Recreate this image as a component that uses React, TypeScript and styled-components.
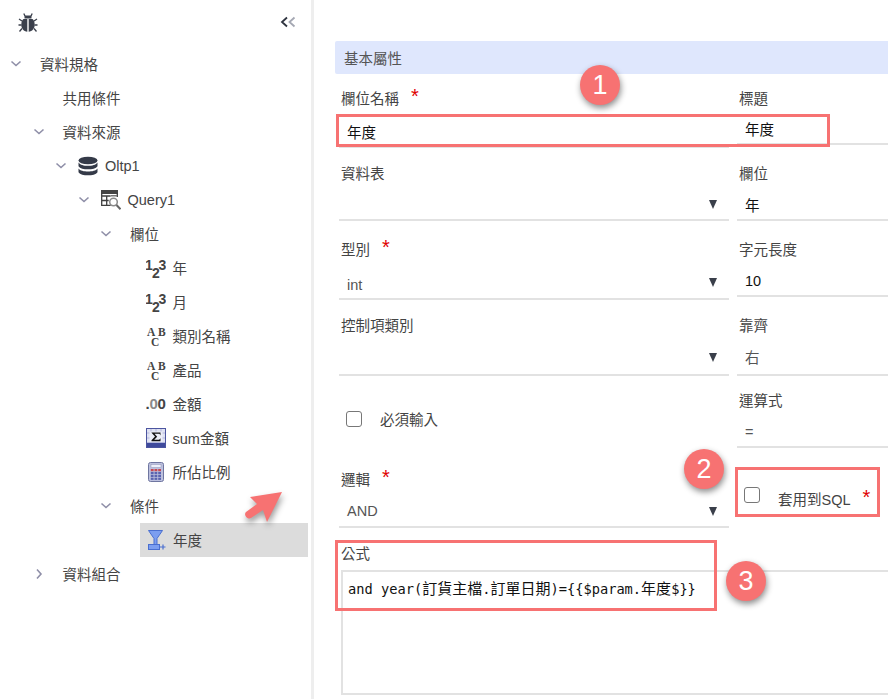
import React from 'react';
import styled, { createGlobalStyle } from 'styled-components';

const GlobalStyle = createGlobalStyle`
  html, body {
    margin: 0;
    padding: 0;
    background: #fff;
  }
  body {
    font-family: "Liberation Sans", "Noto Sans CJK TC", sans-serif;
    font-size: 14.5px;
    color: #444;
  }
`;

const Page = styled.div`
  position: relative;
  display: flex;
  width: 888px;
  height: 699px;
  overflow: hidden;
`;

const Sidebar = styled.aside`
  flex: 0 0 311px;
  border-right: 3px solid #eeeeee;
  box-sizing: content-box;
`;

const SideHeader = styled.div`
  display: flex;
  align-items: center;
  justify-content: space-between;
  height: 47px;
  padding: 0 15px 3px 18px;
  box-sizing: border-box;
`;

const Tree = styled.div`
  width: 308px;
`;

const Row = styled.div<{ $level: number; $selected?: boolean }>`
  display: flex;
  align-items: center;
  height: 34px;
  color: #444;
  margin-left: ${(p) => (p.$selected ? 140 : 0)}px;
  padding-left: ${(p) => (p.$selected ? 6 : p.$level * 22.5 + 7)}px;
  background: ${(p) => (p.$selected ? '#dcdcdc' : 'transparent')};
`;

const Caret = styled.span<{ $icon?: boolean }>`
  display: flex;
  align-items: center;
  flex: 0 0 ${(p) => (p.$icon ? 26 : 33)}px;
  padding-left: 3px;
  box-sizing: border-box;
`;

const NodeIcon = styled.span`
  display: flex;
  align-items: flex-start;
  justify-content: center;
  flex: 0 0 20px;
  height: 20px;
  margin-right: 7px;
  color: #343a48;
`;

const LeafIndent = styled.span<{ $icon?: boolean }>`
  flex: 0 0 ${(p) => (p.$icon ? 26 : 33)}px;
`;

const NodeText = styled.span<{ $latin?: boolean }>`
  margin-bottom: ${(p) => (p.$latin ? 0 : 2)}px;
`;

const Main = styled.main`
  flex: 0 0 574px;
  padding: 41px 0 0 21px;
  box-sizing: border-box;
`;

const SectionBar = styled.div`
  display: flex;
  align-items: center;
  width: 600px;
  height: 33px;
  padding-left: 9px;
  box-sizing: border-box;
  background: #dfe7fd;
  border-radius: 2px;
  color: #555;
`;

const FormGrid = styled.div`
  display: grid;
  grid-template-columns: 390px 200px;
  column-gap: 8px;
  margin: 13px 0 0 4px;
`;

const Column = styled.div`
  display: flex;
  flex-direction: column;
`;

const Field = styled.div<{ $gap?: number; $top?: number }>`
  margin-top: ${(p) => p.$top ?? 0}px;
  margin-bottom: ${(p) => p.$gap ?? 17}px;
`;

const Label = styled.label`
  display: block;
  height: 24px;
  line-height: 24px;
  padding-left: 2px;
  color: #444;
`;

const Required = styled.span`
  margin-left: 12px;
  color: #e00000;
  font-size: 20px;
  line-height: 14px;
  vertical-align: 1px;
`;

const Control = styled.div<{ $height: number; $bottom?: number; $dark?: boolean }>`
  display: flex;
  align-items: flex-end;
  justify-content: space-between;
  height: ${(p) => p.$height}px;
  padding: 0 12px ${(p) => p.$bottom ?? 3}px 8px;
  box-sizing: border-box;
  border-bottom: 2px solid #e2e2e2;
  line-height: 20px;
  color: ${(p) => (p.$dark ? '#111' : '#555')};
`;

const DropArrow = styled.span<{ $lift: number }>`
  width: 0;
  height: 0;
  margin-bottom: ${(p) => p.$lift}px;
  border-left: 4.5px solid transparent;
  border-right: 4.5px solid transparent;
  border-top: 9px solid #3a3f4a;
`;

const CheckRow = styled.div<{ $top: number; $left: number }>`
  display: flex;
  align-items: center;
  height: 32px;
  margin-top: ${(p) => p.$top}px;
  padding-left: ${(p) => p.$left}px;
`;

const Checkbox = styled.span`
  flex: 0 0 16px;
  height: 16px;
  box-sizing: border-box;
  border: 1.5px solid #777;
  border-radius: 3px;
  background: #fff;
`;

const CheckText = styled.span<{ $offset: number; $down?: number }>`
  margin-left: ${(p) => p.$offset}px;
  margin-top: ${(p) => p.$down ?? -2}px;
`;

const FormulaBox = styled.div`
  width: 560px;
  height: 125px;
  margin: 4px 0 0 2px;
  padding: 7px 5px;
  box-sizing: border-box;
  border: 2px solid #e2e2e2;
  font-family: "DejaVu Sans Mono", "Noto Sans CJK TC", monospace;
  font-size: 13.7px;
  line-height: 20px;
  color: #111;
  white-space: nowrap;
`;

const Wide = styled.span`
  font-size: 15px;
`;

const RedBox = styled.div<{ $x: number; $y: number; $w: number; $h: number }>`
  position: absolute;
  left: ${(p) => p.$x}px;
  top: ${(p) => p.$y}px;
  width: ${(p) => p.$w}px;
  height: ${(p) => p.$h}px;
  box-sizing: border-box;
  border: 3px solid #f77272;
`;

const Badge = styled.div<{ $x: number; $y: number }>`
  position: absolute;
  left: ${(p) => p.$x - 20}px;
  top: ${(p) => p.$y - 20}px;
  display: flex;
  align-items: center;
  justify-content: center;
  width: 40px;
  height: 40px;
  border-radius: 50%;
  background: #f77272;
  box-shadow: 1px 3px 6px rgba(0, 0, 0, 0.45);
  color: #fff;
  font-size: 27px;
`;

const ArrowMark = styled.svg`
  position: absolute;
  left: 236px;
  top: 484px;
  overflow: visible;
  filter: drop-shadow(1px 4px 3px rgba(0, 0, 0, 0.4));
`;

const Chevron = ({ open = true }: { open?: boolean }) => (
  <svg width="12" height="12" viewBox="0 0 12 12" fill="none" stroke="#8f8fa8" strokeWidth="1.6">
    {open ? <path d="M1.5 3.5 6 7.5 10.5 3.5" /> : <path d="M4 1.5 8 6 4 10.5" />}
  </svg>
);

const BugIcon = () => (
  <svg width="20" height="21" viewBox="0 0 20 21">
    <g stroke="#3b404c" strokeWidth="1.3" fill="none">
      <path d="M7 4 5.8 1.5M13 4l1.2-2.5M4 9 1 7M16 9l3-2M3.5 13H.5M16.5 13h3M4 16.5 1.5 19.5M16 16.5l2.5 3" />
    </g>
    <path d="M6.5 3.5h7v3h-7z" fill="#3b404c" />
    <path d="M9.3 7H5.5C4 8 3.3 10 3.3 13c0 3.5 2.5 6.500 6 6.800zM10.700 7h3.800c1.500 1 2.200 3 2.200 6 0 3.500-2.500 6.500-6 6.800z" fill="#3b404c" />
  </svg>
);

const CollapseIcon = () => (
  <svg width="16" height="12" viewBox="0 0 16 12" fill="none" strokeWidth="1.8">
    <path d="M7 1.5 2 6l5 4.500" stroke="#2f3440" />
    <path d="M14.500 1.500 9.500 6l5 4.500" stroke="#a5a8b3" />
  </svg>
);

const DatabaseIcon = () => (
  <svg width="20" height="20" viewBox="0 0 20 20" fill="#343a48">
    <ellipse cx="10" cy="4.500" rx="9.500" ry="3.800" />
    <path d="M.5 6.500C2 9 6 9.800 10 9.800S18 9 19.500 6.500v3.700C18 12.500 14 13.300 10 13.300S2 12.500.5 10.200z" />
    <path d="M.5 12.500C2 14.800 6 15.500 10 15.500s8-.7 9.500-3v3.700C18 18.500 14 19.300 10 19.300S2 18.500.5 16.200z" />
  </svg>
);

const QueryIcon = () => (
  <svg width="20" height="20" viewBox="0 0 20 20">
    <rect x="0" y="0" width="17" height="4" fill="#444" />
    <path d="M.7 3v12.300h9M5.700 6v9M.7 6h9M.7 10.500h7M16.300 3v4" fill="none" stroke="#3f3f3f" strokeWidth="1.300" />
    <rect x="10" y="5" width="6" height="1.500" fill="#777" />
    <circle cx="12.500" cy="12" r="3.800" fill="#fff" stroke="#8a8a8a" strokeWidth="1.500" />
    <path d="m15.500 15 4 4.300" stroke="#666" strokeWidth="2" />
  </svg>
);

const NumberIcon = () => (
  <svg width="20" height="24" viewBox="0 0 20 24" fontFamily="Liberation Sans" fontWeight="700" fontSize="14" fill="#444">
    <text x="-1" y="12">1</text>
    <text x="6" y="20">2</text>
    <text x="12.500" y="12">3</text>
  </svg>
);

const TextIcon = () => (
  <svg width="20" height="24" viewBox="0 0 20 24" fontFamily="Liberation Serif" fontWeight="700" fontSize="11.500" fill="#444">
    <text x="1" y="9.500">A</text>
    <text x="12" y="9.500">B</text>
    <text x="5" y="19.500">C</text>
  </svg>
);

const DecimalIcon = () => (
  <svg width="20" height="24" viewBox="0 0 20 24" fontFamily="Liberation Sans" fontWeight="700" fontSize="15" fill="#444">
    <text x="-0.5" y="15">.</text>
    <text x="3.500" y="15" fill="#8a8a8a">0</text>
    <text x="11.500" y="15">0</text>
  </svg>
);

const SumIcon = () => (
  <svg width="20" height="20" viewBox="0 0 20 20">
    <rect x=".5" y=".5" width="19" height="19" fill="#dfe2f2" stroke="#4c55a0" />
    <path d="M1 5h18M1 10h18M1 14.500h18M5 1v13M10 1v13M15 1v13" stroke="#a8aed8" strokeWidth=".8" />
    <rect x="1" y="15" width="18" height="4" fill="#3f4a9c" />
    <rect x="3.500" y="3.500" width="13" height="10.500" fill="#eceef8" />
    <path d="M5.500 4.500h9v3l-1-1.700H8.500l2.700 3-3 3h5l1.300-1.600v3h-9v-1l3.500-3.700-3.500-3.800z" fill="#111" />
  </svg>
);

const CalcIcon = () => {
  const keys = [0, 1, 2, 3].flatMap((row) => [0, 1, 2].map((col) => ({ row, col })));
  return (
    <svg width="20" height="20" viewBox="0 0 20 20">
      <rect x="2.500" y=".5" width="15" height="19" rx="2" fill="#bcc0de" stroke="#6f76a0" />
      <rect x="5" y="2.500" width="10" height="3" fill="#eef0fb" stroke="#8d92b5" strokeWidth=".5" />
      {keys.map(({ row, col }) => (
        <rect
          key={`${row}-${col}`}
          x={4.800 + col * 3.700}
          y={7 + row * 2.900}
          width="2.800"
          height="2.200"
          fill={row === 0 ? '#c8484f' : '#5a63b0'}
        />
      ))}
    </svg>
  );
};

const FilterIcon = () => (
  <svg width="20" height="21" viewBox="0 0 20 21">
    <path d="M2.500.5h14l-5.500 8v6H8v-6z" fill="#7c9ef0" stroke="#4a6fd0" />
    <rect x="2.500" y="14.500" width="11" height="5" fill="#7c9ef0" stroke="#4a6fd0" />
    <path d="M14 17h5.500M17 14.500v5" stroke="#4a6fd0" strokeWidth="1.200" />
  </svg>
);

type NodeProps = {
  level: number;
  text: string;
  icon?: React.ReactNode;
  caret?: 'open' | 'closed';
  selected?: boolean;
  latin?: boolean;
};

const TreeNode = ({ level, text, icon, caret, selected, latin }: NodeProps) => (
  <Row $level={level} $selected={selected}>
    {caret && (
      <Caret $icon={!!icon}>
        <Chevron open={caret === 'open'} />
      </Caret>
    )}
    {!caret && !selected && <LeafIndent $icon={!!icon} />}
    {icon && <NodeIcon>{icon}</NodeIcon>}
    <NodeText $latin={latin}>{text}</NodeText>
  </Row>
);

export default function App() {
  return (
    <Page>
      <GlobalStyle />
      <Sidebar>
        <SideHeader>
          <BugIcon />
          <CollapseIcon />
        </SideHeader>
        <Tree>
          <TreeNode level={0} caret="open" text="資料規格" />
          <TreeNode level={1} text="共用條件" />
          <TreeNode level={1} caret="open" text="資料來源" />
          <TreeNode level={2} caret="open" icon={<DatabaseIcon />} text="Oltp1" latin />
          <TreeNode level={3} caret="open" icon={<QueryIcon />} text="Query1" latin />
          <TreeNode level={4} caret="open" text="欄位" />
          <TreeNode level={5} icon={<NumberIcon />} text="年" />
          <TreeNode level={5} icon={<NumberIcon />} text="月" />
          <TreeNode level={5} icon={<TextIcon />} text="類別名稱" />
          <TreeNode level={5} icon={<TextIcon />} text="產品" />
          <TreeNode level={5} icon={<DecimalIcon />} text="金額" />
          <TreeNode level={5} icon={<SumIcon />} text="sum金額" />
          <TreeNode level={5} icon={<CalcIcon />} text="所佔比例" />
          <TreeNode level={4} caret="open" text="條件" />
          <TreeNode level={5} selected icon={<FilterIcon />} text="年度" />
          <TreeNode level={1} caret="closed" text="資料組合" />
        </Tree>
      </Sidebar>

      <Main>
        <SectionBar>基本屬性</SectionBar>
        <FormGrid>
          <Column>
            <Field $gap={14}>
              <Label>欄位名稱<Required>*</Required></Label>
              <Control $height={37} $dark>年度</Control>
            </Field>
            <Field>
              <Label>資料表</Label>
              <Control $height={35} $bottom={4}><span /><DropArrow $lift={6} /></Control>
            </Field>
            <Field $gap={14}>
              <Label>型別<Required>*</Required></Label>
              <Control $height={38}>int<DropArrow $lift={8} /></Control>
            </Field>
            <Field $gap={0}>
              <Label>控制項類別</Label>
              <Control $height={38} $bottom={5}><span /><DropArrow $lift={7} /></Control>
            </Field>
            <CheckRow $top={27} $left={7}>
              <Checkbox />
              <CheckText $offset={18}>必須輸入</CheckText>
            </CheckRow>
            <Field $gap={14} $top={33}>
              <Label>邏輯<Required>*</Required></Label>
              <Control $height={36} $bottom={5}>AND<DropArrow $lift={5} /></Control>
            </Field>
            <Label>公式</Label>
            <FormulaBox>
              and year(<Wide>訂貨主檔</Wide>.<Wide>訂單日期</Wide>)={'{{'}$param.<Wide>年度</Wide>${'}}'}
            </FormulaBox>
          </Column>
          <Column>
            <Field>
              <Label>標題</Label>
              <Control $height={34} $dark>年度</Control>
            </Field>
            <Field>
              <Label>欄位</Label>
              <Control $height={35} $dark>年</Control>
            </Field>
            <Field>
              <Label>字元長度</Label>
              <Control $height={35} $bottom={4} $dark>10</Control>
            </Field>
            <Field $gap={13}>
              <Label>靠齊</Label>
              <Control $height={38} $bottom={6}>右</Control>
            </Field>
            <Field $gap={0}>
              <Label>運算式</Label>
              <Control $height={35} $bottom={4}>=</Control>
            </Field>
            <CheckRow $top={31} $left={7}>
              <Checkbox />
              <CheckText $offset={18} $down={6}>套用到SQL<Required>*</Required></CheckText>
            </CheckRow>
          </Column>
        </FormGrid>
      </Main>

      <RedBox $x={336} $y={114} $w={494} $h={33} />
      <RedBox $x={735} $y={467} $w={145} $h={50} />
      <RedBox $x={335} $y={540} $w={382} $h={71} />
      <Badge $x={600} $y={85}>1</Badge>
      <Badge $x={704} $y={469}>2</Badge>
      <Badge $x={746} $y={581}>3</Badge>
      <ArrowMark width="50" height="42" viewBox="0 0 50 42">
        <path
          d="M46 8 14 13 21 20 10 28 C7 31 12 36 15 34 L27 26 31 38 Z"
          fill="#f77272"
        />
      </ArrowMark>
    </Page>
  );
}
